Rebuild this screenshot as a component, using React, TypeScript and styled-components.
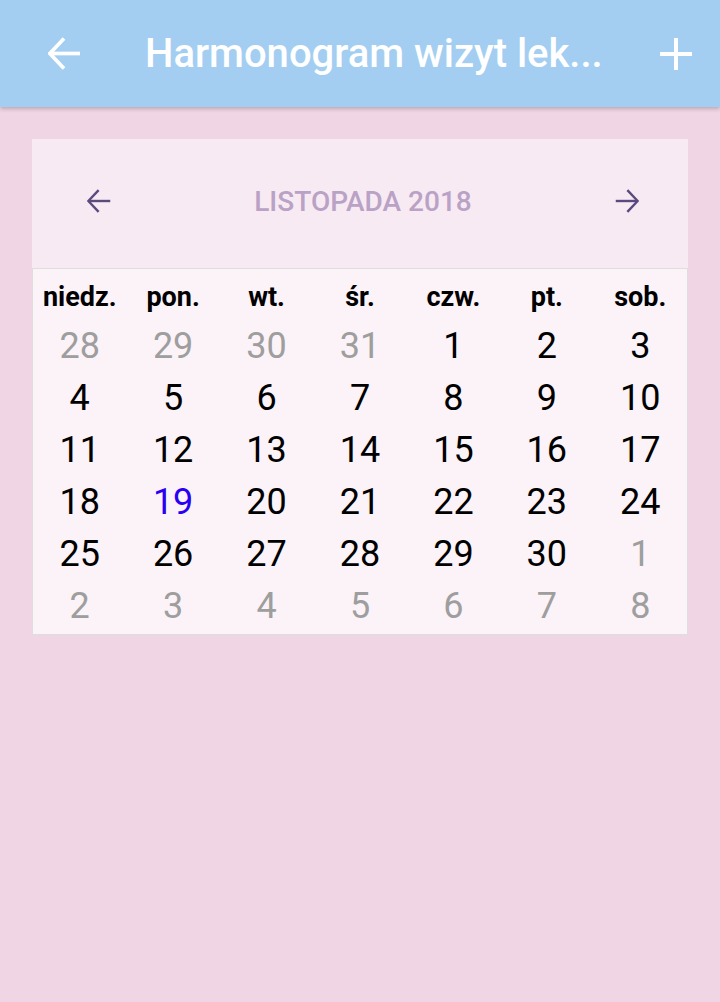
import React from "react";
import styled, { createGlobalStyle } from "styled-components";

const Global = createGlobalStyle`
  html, body { margin: 0; padding: 0; }
  body {
    background: #f0d6e4;
    font-family: Roboto, "Noto Sans", sans-serif;
    width: 720px;
    height: 1002px;
    overflow: hidden;
  }
`;

const Page = styled.div`
  width: 720px;
  height: 1002px;
  background: #f0d6e4;
  display: flex;
  flex-direction: column;
`;

const AppBar = styled.header`
  height: 107px;
  background: #a3cef1;
  display: flex;
  align-items: center;
  padding: 0 20px 0 40px;
  box-shadow: 0 2px 4px rgba(0, 0, 0, 0.22);
  position: relative;
  z-index: 1;
  flex-shrink: 0;
`;

const IconButton = styled.button`
  background: none;
  border: none;
  padding: 0;
  margin: 0;
  width: 48px;
  height: 48px;
  display: flex;
  align-items: center;
  justify-content: center;
  cursor: pointer;
  flex-shrink: 0;
`;

const Title = styled.h1`
  margin: 0 0 0 57px;
  flex: 1;
  color: #ffffff;
  font-family: Roboto, sans-serif;
  font-weight: 500;
  font-size: 40px;
  letter-spacing: 0;
  white-space: nowrap;
  overflow: hidden;
`;

const Content = styled.main`
  padding: 32px 32px 0 32px;
`;

const Card = styled.section`
  display: flex;
  flex-direction: column;
`;

const MonthHeader = styled.div`
  height: 129px;
  box-sizing: border-box;
  background: #f7eaf3;
  display: flex;
  align-items: center;
  justify-content: space-between;
  padding: 0 46px 5px 52px;
`;

const MonthLabel = styled.div`
  color: #b9a2c5;
  font-family: Roboto, sans-serif;
  font-weight: 500;
  font-size: 28px;
  letter-spacing: 0;
`;

const NavButton = styled.button`
  background: none;
  border: none;
  padding: 0;
  width: 30px;
  height: 30px;
  display: flex;
  align-items: center;
  justify-content: center;
  cursor: pointer;
`;

const Grid = styled.div`
  background: #fbf3f8;
  border: 1px solid #dedede;
  display: grid;
  grid-template-columns: repeat(7, 1fr);
  padding: 8px 0 2px 0;
`;

const DayName = styled.div`
  text-align: center;
  font-family: Roboto, sans-serif;
  font-weight: 700;
  font-size: 27px;
  color: #000;
  height: 40px;
  line-height: 40px;
  margin-bottom: 3px;
`;

const DateCell = styled.div<{ $muted?: boolean; $today?: boolean }>`
  text-align: center;
  font-family: Roboto, sans-serif;
  font-weight: 400;
  font-size: 36px;
  height: 52px;
  line-height: 52px;
  color: ${(p) => (p.$today ? "#2a00f5" : p.$muted ? "#9e9e9e" : "#000")};
`;

const BackIcon = ({ color, size, stroke }: { color: string; size: number; stroke: number }) => (
  <svg width={size} height={size} viewBox="0 0 32 32" fill="none">
    <path d="M31 16H2.5" stroke={color} strokeWidth={stroke} />
    <path d="M15.5 1.5L1.8 16L15.5 30.5" stroke={color} strokeWidth={stroke} />
  </svg>
);

const ForwardIcon = ({ color, size, stroke }: { color: string; size: number; stroke: number }) => (
  <svg width={size} height={size} viewBox="0 0 32 32" fill="none">
    <path d="M1 16H29.5" stroke={color} strokeWidth={stroke} />
    <path d="M16.5 1.5L30.2 16L16.5 30.5" stroke={color} strokeWidth={stroke} />
  </svg>
);

const PlusIcon = () => (
  <svg width="32" height="32" viewBox="0 0 32 32" fill="none">
    <path d="M0 16H32M16 0V32" stroke="#fff" strokeWidth="4" />
  </svg>
);

const dayNames = ["niedz.", "pon.", "wt.", "śr.", "czw.", "pt.", "sob."];

type Day = { n: number; muted?: boolean; today?: boolean };

const buildDays = (): Day[] => {
  const days: Day[] = [];
  [28, 29, 30, 31].forEach((n) => days.push({ n, muted: true }));
  for (let n = 1; n <= 30; n++) days.push({ n, today: n === 19 });
  for (let n = 1; n <= 8; n++) days.push({ n, muted: true });
  return days;
};

export default function App() {
  const days = buildDays();
  return (
    <Page>
      <Global />
      <AppBar>
        <IconButton aria-label="Wstecz">
          <BackIcon color="#fff" size={33} stroke={3.6} />
        </IconButton>
        <Title>Harmonogram wizyt lek...</Title>
        <IconButton aria-label="Dodaj">
          <PlusIcon />
        </IconButton>
      </AppBar>
      <Content>
        <Card>
          <MonthHeader>
            <NavButton aria-label="Poprzedni miesiąc">
              <BackIcon color="#5b4a7e" size={24} stroke={3.2} />
            </NavButton>
            <MonthLabel>LISTOPADA 2018</MonthLabel>
            <NavButton aria-label="Następny miesiąc">
              <ForwardIcon color="#5b4a7e" size={24} stroke={3.2} />
            </NavButton>
          </MonthHeader>
          <Grid>
            {dayNames.map((d) => (
              <DayName key={d}>{d}</DayName>
            ))}
            {days.map((d, i) => (
              <DateCell key={i} $muted={d.muted} $today={d.today}>
                {d.n}
              </DateCell>
            ))}
          </Grid>
        </Card>
      </Content>
    </Page>
  );
}
